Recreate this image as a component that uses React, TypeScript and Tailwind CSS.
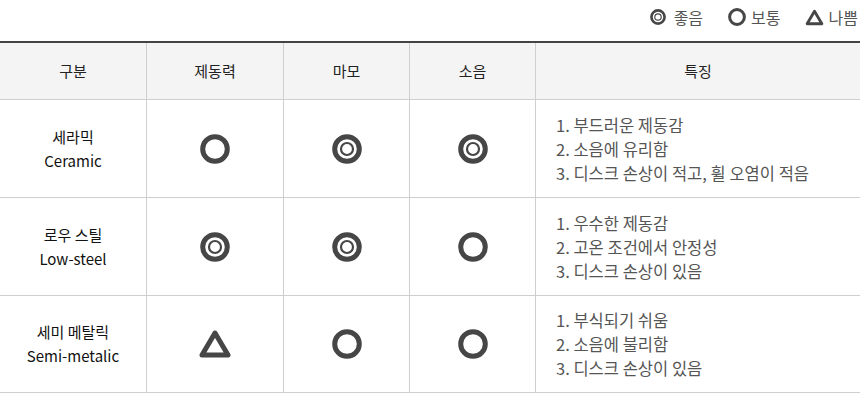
type Mark = "good" | "normal" | "bad";

const font = { fontFamily: '"Noto Sans CJK KR", "Noto Sans", sans-serif' };

function Icon({ type, size }: { type: Mark; size: number }) {
  if (type === "bad") {
    return (
      <svg width={size + 4} height={size} viewBox="0 0 34 30">
        <path d="M17 4 L30 26 L4 26 Z" fill="none" stroke="#464646" strokeWidth="5" strokeLinejoin="round" />
      </svg>
    );
  }
  return (
    <svg width={size} height={size} viewBox="0 0 30 30">
      <circle cx="15" cy="15" r="12.3" fill="none" stroke="#464646" strokeWidth="5" />
      {type === "good" && <circle cx="15" cy="15" r="6" fill="none" stroke="#464646" strokeWidth="2.2" />}
    </svg>
  );
}

const rows: { ko: string; en: string; marks: Mark[]; notes: string[] }[] = [
  {
    ko: "세라믹",
    en: "Ceramic",
    marks: ["normal", "good", "good"],
    notes: ["1. 부드러운 제동감", "2. 소음에 유리함", "3. 디스크 손상이 적고, 휠 오염이 적음"],
  },
  {
    ko: "로우 스틸",
    en: "Low-steel",
    marks: ["good", "good", "normal"],
    notes: ["1. 우수한 제동감", "2. 고온 조건에서 안정성", "3. 디스크 손상이 있음"],
  },
  {
    ko: "세미 메탈릭",
    en: "Semi-metalic",
    marks: ["bad", "normal", "normal"],
    notes: ["1. 부식되기 쉬움", "2. 소음에 불리함", "3. 디스크 손상이 있음"],
  },
];

const headers = ["구분", "제동력", "마모", "소음", "특징"];

export default function App() {
  return (
    <div className="w-[860px] h-[401px] bg-white overflow-hidden" style={font}>
      {/* legend */}
      <div className="h-[41px] flex items-start justify-end pt-[7px] pr-[2px] text-[16px] leading-[20px] text-[#555]">
        <div className="flex items-center">
          <Icon type="good" size={16} />
          <span className="ml-[8px]">좋음</span>
        </div>
        <div className="flex items-center ml-[25px]">
          <Icon type="normal" size={18} />
          <span className="ml-[5px]">보통</span>
        </div>
        <div className="flex items-center ml-[23px]">
          <Icon type="bad" size={17} />
          <span className="ml-[4px]">나쁨</span>
        </div>
      </div>

      {/* table */}
      <div className="border-t-2 border-[#444] grid grid-cols-[147px_137px_126px_126px_1fr]">
        {headers.map((h, i) => (
          <div
            key={h}
            className={`h-[57px] bg-[#f4f4f4] border-b border-[#cfcfcf] flex items-center justify-center text-[15px] text-[#222] ${
              i < 4 ? "border-r" : ""
            }`}
          >
            {h}
          </div>
        ))}
        {rows.map((r, ri) => (
          <div key={r.en} className="contents">
            <div
              className={`${ri === 2 ? "h-[97px]" : "h-[98px]"} border-b border-r border-[#cfcfcf] flex flex-col items-center justify-center text-[15px] leading-[24px] text-[#111]`}
            >
              <span>{r.ko}</span>
              <span>{r.en}</span>
            </div>
            {r.marks.map((m, mi) => (
              <div key={mi} className="border-b border-r border-[#cfcfcf] flex items-center justify-center">
                <Icon type={m} size={30} />
              </div>
            ))}
            <div className="border-b border-[#cfcfcf] flex flex-col justify-center pl-[20px] text-[16.5px] leading-[24px] text-[#555]">
              {r.notes.map((n) => (
                <span key={n}>{n}</span>
              ))}
            </div>
          </div>
        ))}
      </div>
    </div>
  );
}
